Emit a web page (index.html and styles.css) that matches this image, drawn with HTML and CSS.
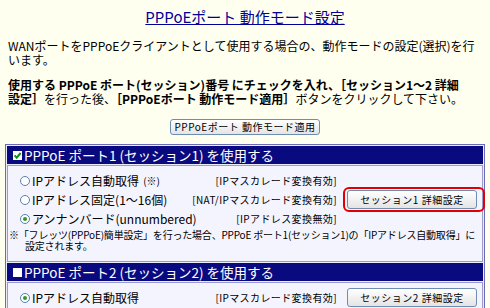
FILE: index.html
```html
<!DOCTYPE html>
<html lang="ja">
<head>
    <meta charset="UTF-8">
    <title>PPPoEポート 動作モード設定</title>
    <link rel="stylesheet" href="styles.css">
</head>
<body>
    <h1 class="title"><a href="#">PPPoEポート 動作モード設定</a></h1>
    <p class="lead">WANポートをPPPoEクライアントとして使用する場合の、動作モードの設定(選択)を行います。</p>
    <p class="guide"><b>使用する PPPoE ポート(セッション)番号 にチェックを入れ、［セッション1～2 詳細<br>設定］</b>を行った後、<b>［PPPoEポート 動作モード適用］</b>ボタンをクリックして下さい。</p>

    <div class="apply">
        <button class="btn btn-apply">PPPoEポート 動作モード適用</button>
    </div>

    <div class="ports">
        <div class="port-head">
            <span class="check"><svg viewBox="0 0 9 9" width="9" height="9"><path d="M1.6 4.4 L3.7 6.7 L7.6 2" fill="none" stroke="#168c16" stroke-width="2"/></svg></span>
            <span class="head-text">PPPoE ポート1 (セッション1) を使用する</span>
        </div>
        <div class="port-body">
            <div class="row">
                <label class="opt"><span class="radio"></span><span>IPアドレス自動取得</span><small>(※)</small></label>
                <span class="tag">[IPマスカレード変換有効]</span>
                <span class="act"></span>
            </div>
            <div class="row">
                <label class="opt"><span class="radio"></span><span>IPアドレス固定(1～16個)</span></label>
                <span class="tag">[NAT/IPマスカレード変換有効]</span>
                <span class="act"><span class="mark"><button class="btn btn-session">セッション1 詳細設定</button></span></span>
            </div>
            <div class="row">
                <label class="opt"><span class="radio on"></span><span>アンナンバード(unnumbered)</span></label>
                <span class="tag">[IPアドレス変換無効]</span>
                <span class="act"></span>
            </div>
            <p class="note">※「フレッツ(PPPoE)簡単設定」を行った場合、PPPoE ポート1(セッション1)の「IPアドレス自動取得」に設定されます。</p>
        </div>
        <div class="port-head">
            <span class="check"></span>
            <span class="head-text">PPPoE ポート2 (セッション2) を使用する</span>
        </div>
        <div class="port-body">
            <div class="row">
                <label class="opt"><span class="radio on"></span><span>IPアドレス自動取得</span></label>
                <span class="tag">[IPマスカレード変換有効]</span>
                <span class="act"><button class="btn btn-session">セッション2 詳細設定</button></span>
            </div>
        </div>
    </div>
</body>
</html>
```

FILE: styles.css
```css
body {
    margin: 0;
    padding: 0;
    background-color: #fffff0;
    color: #000;
    font-family: "Noto Sans CJK JP", "Liberation Sans", sans-serif;
    font-size: 12px;
}
.title {
    margin: 0;
    padding-top: 8px;
    text-align: center;
    font-size: 15px;
    font-weight: normal;
    line-height: 18px;
}
.title a {
    color: #000099;
    text-decoration: underline;
}
.lead {
    margin: 13px 8px 0;
    line-height: 14px;
}
.guide {
    margin: 11px 8px 0;
    line-height: 14px;
}
.guide b {
    font-weight: bold;
}
.apply {
    margin-top: 13px;
    display: flex;
    justify-content: center;
}
.btn {
    font-family: "Noto Sans CJK JP", "Liberation Sans", sans-serif;
    font-size: 10px;
    letter-spacing: 0.5px;
    line-height: 12px;
    white-space: nowrap;
    color: #000;
    background: linear-gradient(#ffffff, #e4e4e4);
    border: 1px solid #6f8db3;
    border-radius: 3px;
    padding: 0;
    cursor: pointer;
}
.btn-apply {
    width: 150px;
    height: 16px;
}
.btn-session {
    width: 130px;
    height: 19px;
}
.ports {
    margin: 9px 5px 0;
    border: 1px solid #6b6bb8;
    padding: 1px;
    background-color: #ececf8;
    display: flex;
    flex-direction: column;
    gap: 1px;
}
.port-head {
    height: 18px;
    background-color: #0a0a80;
    color: #fff;
    font-size: 13.5px;
    line-height: 18px;
    padding-left: 6px;
    display: flex;
    align-items: center;
    gap: 2px;
    white-space: nowrap;
}
.check {
    width: 9px;
    height: 9px;
    background-color: #fff;
    display: inline-flex;
}
.port-body {
    border: 1px solid #9a9ad0;
    background-color: #f4f4ff;
    padding: 5px 0 10px;
}
.row {
    height: 19px;
    line-height: 14px;
    display: flex;
    align-items: center;
}
.opt {
    flex: 1;
    padding-left: 12px;
    display: flex;
    align-items: center;
    gap: 2px;
}
.opt small {
    font-size: 10px;
    margin-left: 2px;
}
.radio {
    width: 8px;
    height: 8px;
    border: 1px solid #5b7fb0;
    border-radius: 50%;
    background-color: #fff;
    display: inline-flex;
    align-items: center;
    justify-content: center;
}
.radio.on::after {
    content: "";
    width: 4px;
    height: 4px;
    border-radius: 50%;
    background-color: #2a9a2a;
}
.tag {
    font-size: 10px;
    letter-spacing: 0.4px;
    text-align: right;
}
.act {
    width: 145px;
    padding-left: 6px;
    display: flex;
    align-items: center;
    flex-shrink: 0;
    box-sizing: border-box;
}
.act > .btn {
    margin-left: 4px;
}
.mark {
    border: 2px solid #e00000;
    border-radius: 6px;
    padding: 1px 6px 1px 2px;
    display: flex;
}
.note {
    margin: 1px 0 0;
    padding-left: 17px;
    text-indent: -16px;
    font-size: 10px;
    letter-spacing: -0.2px;
    line-height: 11px;
}
```
